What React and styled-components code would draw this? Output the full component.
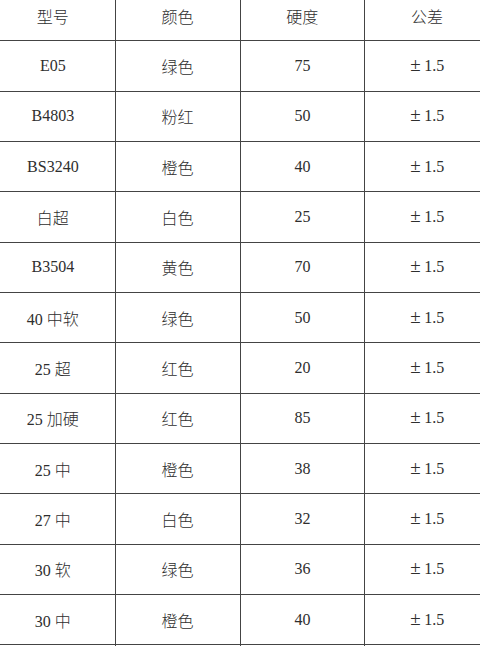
import React from "react";
import styled, { createGlobalStyle } from "styled-components";

const GlobalStyle = createGlobalStyle`
  html, body {
    margin: 0;
    padding: 0;
    background: #fff;
  }
  body {
    width: 480px;
    height: 646px;
    overflow: hidden;
  }
`;

const Page = styled.div`
  width: 480px;
  height: 646px;
  overflow: hidden;
  background: #fff;
`;

const Table = styled.table`
  border-collapse: collapse;
  table-layout: fixed;
  width: 499px;
  margin: -10px 0 0 -10px;
  font-family: "Liberation Serif", "Noto Sans CJK SC", serif;
  font-size: 16px;
  font-weight: 300;
  color: #2e2e2e;
`;

const Cell = styled.td`
  width: 124.75px;
  height: 50.33px;
  padding: 0;
  box-sizing: border-box;
  text-align: center;
  vertical-align: middle;
  border: 1px solid #444;
`;

const HeadCell = styled(Cell).attrs({ as: "th" })`
  font-weight: 300;
`;

const Plus = styled.span`
  display: inline-block;
  width: 14px;
  font-size: 19px;
  line-height: 16px;
  text-align: left;
`;

const head = ["型号", "颜色", "硬度", "公差"];

const rows = [
  ["E05", "绿色", "75"],
  ["B4803", "粉红", "50"],
  ["BS3240", "橙色", "40"],
  ["白超", "白色", "25"],
  ["B3504", "黄色", "70"],
  ["40 中软", "绿色", "50"],
  ["25 超", "红色", "20"],
  ["25 加硬", "红色", "85"],
  ["25 中", "橙色", "38"],
  ["27 中", "白色", "32"],
  ["30 软", "绿色", "36"],
  ["30 中", "橙色", "40"],
  ["", "", ""],
];

export default function App() {
  return (
    <Page>
      <GlobalStyle />
      <Table>
        <thead>
          <tr>
            {head.map((h) => (
              <HeadCell key={h}>{h}</HeadCell>
            ))}
          </tr>
        </thead>
        <tbody>
          {rows.map((r, i) => (
            <tr key={i}>
              <Cell>{r[0]}</Cell>
              <Cell>{r[1]}</Cell>
              <Cell>{r[2]}</Cell>
              <Cell>
                {r[0] && (
                  <>
                    <Plus>±</Plus>1.5
                  </>
                )}
              </Cell>
            </tr>
          ))}
        </tbody>
      </Table>
    </Page>
  );
}
